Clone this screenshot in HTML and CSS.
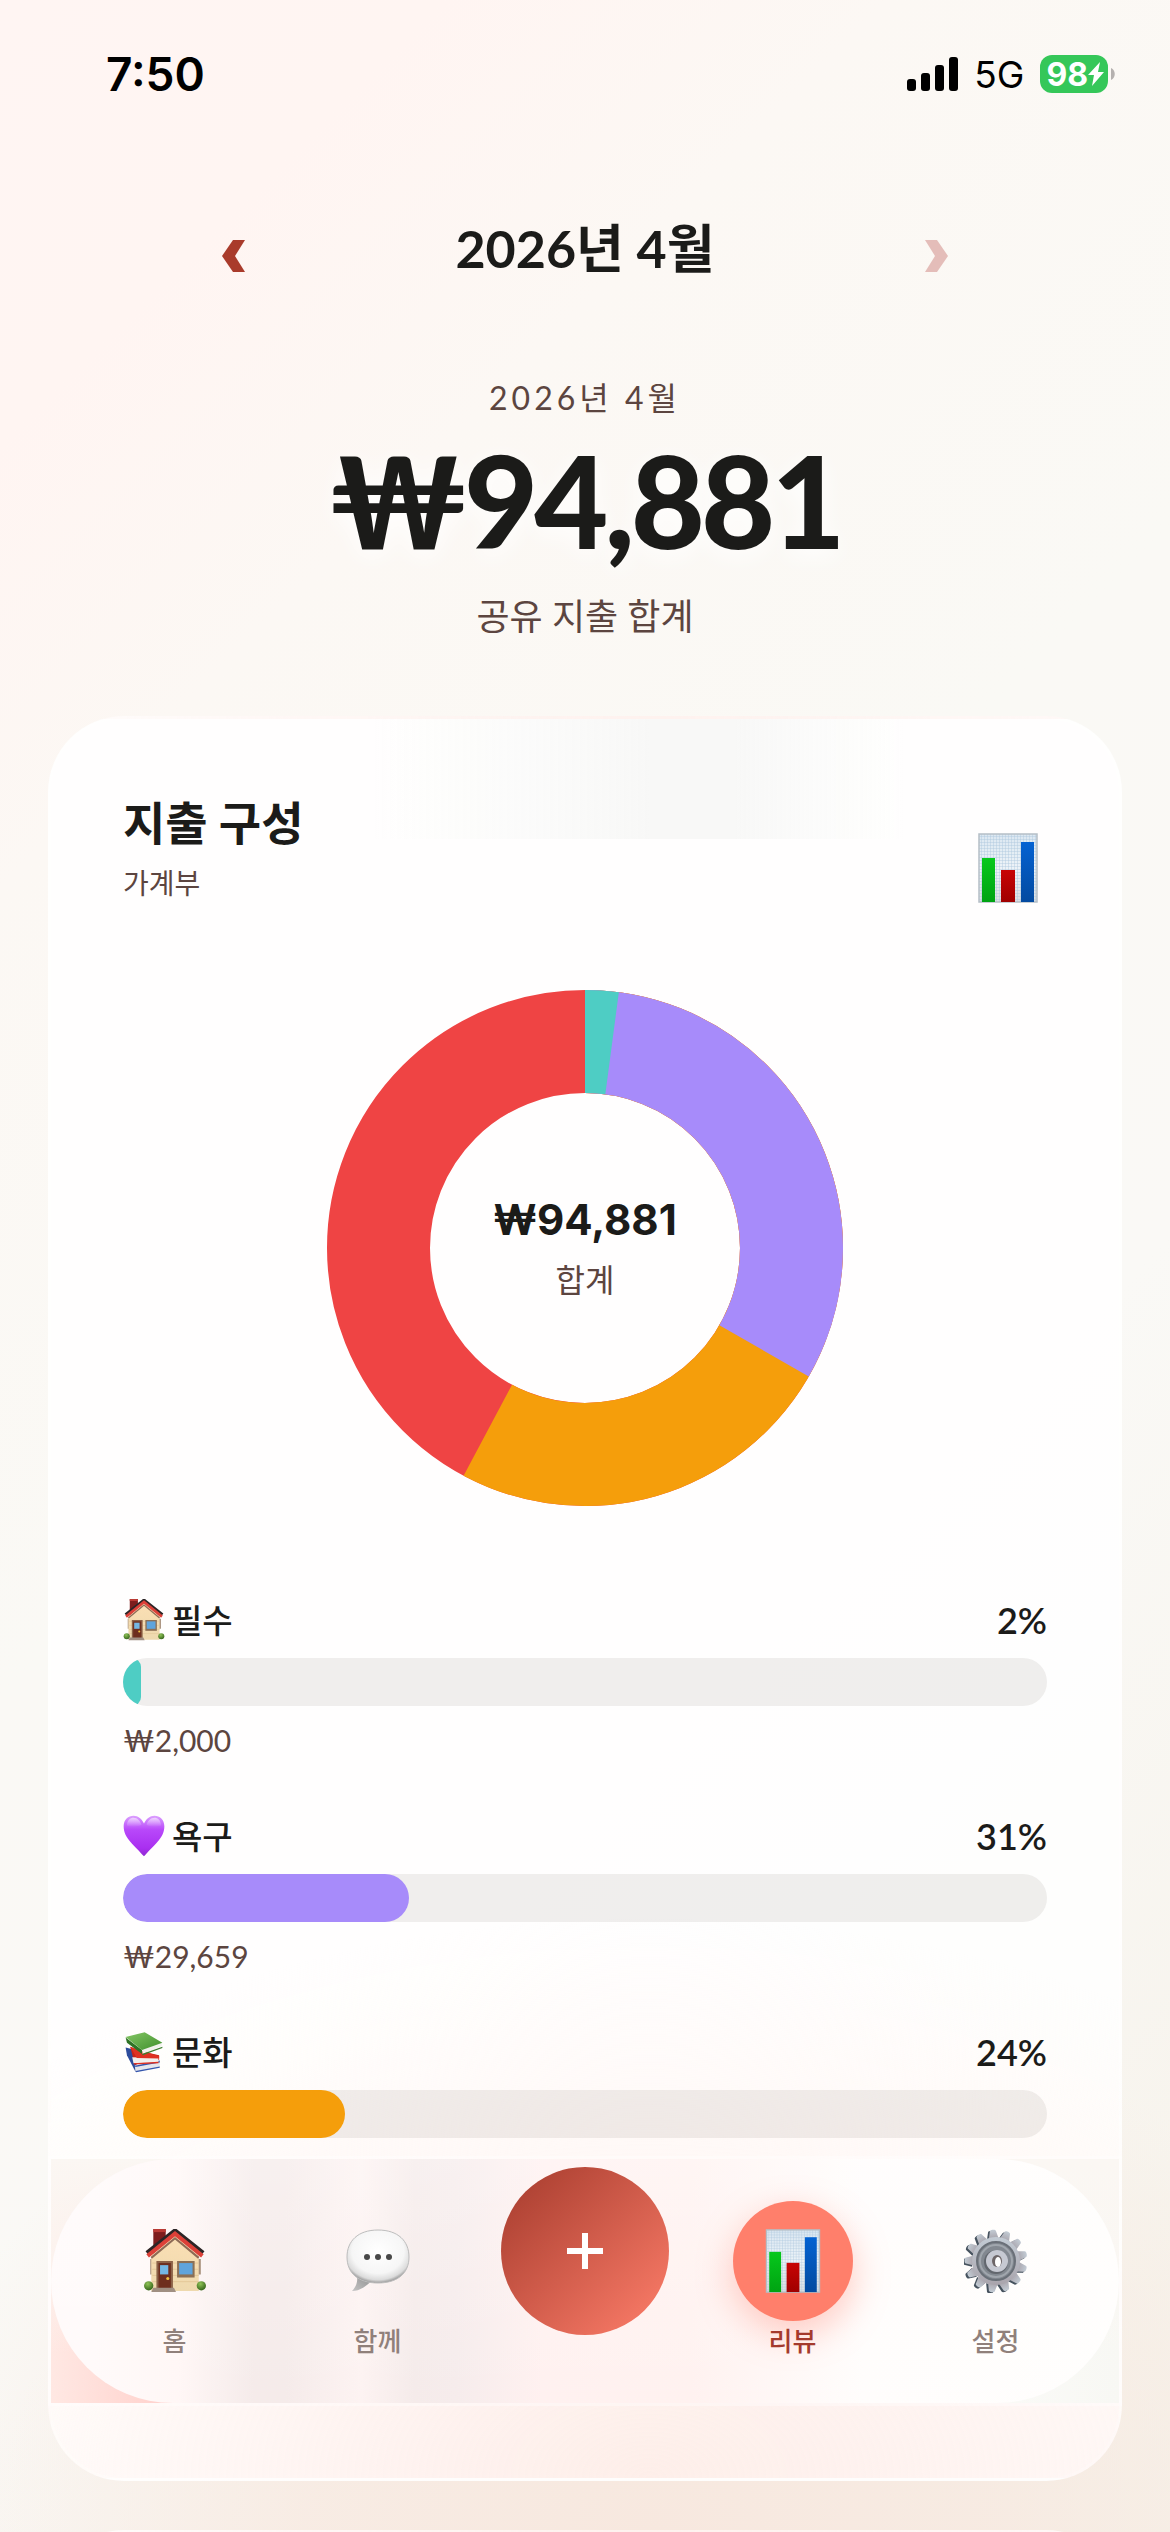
FILE: index.html
```html
<!DOCTYPE html>
<html lang="ko">
<head>
<meta charset="utf-8">
<meta name="viewport" content="width=device-width, initial-scale=1">
<title>리뷰</title>
<link rel="stylesheet" href="styles.css">
</head>
<body>
<svg class="defs" aria-hidden="true">
  <defs>
    <linearGradient id="paper" x1="0" y1="0" x2="0" y2="1"><stop offset="0" stop-color="#dbe7f1"/><stop offset=".5" stop-color="#edf3f8"/><stop offset="1" stop-color="#dcdfe2"/></linearGradient>
    <linearGradient id="green" x1="0" y1="0" x2="0" y2="1"><stop offset="0" stop-color="#06c81c"/><stop offset="1" stop-color="#00a312"/></linearGradient>
    <linearGradient id="crimson" x1="0" y1="0" x2="0" y2="1"><stop offset="0" stop-color="#c80404"/><stop offset="1" stop-color="#a00000"/></linearGradient>
    <linearGradient id="blue" x1="0" y1="0" x2="0" y2="1"><stop offset="0" stop-color="#0462d2"/><stop offset="1" stop-color="#034aa0"/></linearGradient>
    <linearGradient id="wall" x1="0" y1="0" x2="0" y2="1"><stop offset="0" stop-color="#fbdfb4"/><stop offset="1" stop-color="#eed9ae"/></linearGradient>
    <radialGradient id="bush" cx=".4" cy=".3" r=".7"><stop offset="0" stop-color="#8fc356"/><stop offset="1" stop-color="#37661c"/></radialGradient>
    <linearGradient id="heart" x1="0" y1="0" x2="0" y2="1"><stop offset="0" stop-color="#dca0ff"/><stop offset=".35" stop-color="#b848fa"/><stop offset=".8" stop-color="#a92ff0"/><stop offset="1" stop-color="#8f2ad0"/></linearGradient>
    <linearGradient id="shine" x1="0" y1="0" x2="0" y2="1"><stop offset="0" stop-color="#fff" stop-opacity=".6"/><stop offset="1" stop-color="#fff" stop-opacity="0"/></linearGradient>
    <radialGradient id="bubble" cx=".5" cy=".4" r=".6"><stop offset="0" stop-color="#fff"/><stop offset=".7" stop-color="#f6f6f6"/><stop offset=".9" stop-color="#dcdcdc"/><stop offset="1" stop-color="#9a9a9a"/></radialGradient>
    <linearGradient id="tail" x1="1" y1="0" x2="0" y2="1"><stop offset="0" stop-color="#8d8d8d"/><stop offset="1" stop-color="#c4c4c4"/></linearGradient>
    <linearGradient id="steel" x1="0" y1="0" x2="0" y2="1"><stop offset="0" stop-color="#c3ccd5"/><stop offset="1" stop-color="#a9a4ac"/></linearGradient>
    <linearGradient id="cover" x1="0" y1="0" x2="1" y2="1"><stop offset="0" stop-color="#84c665"/><stop offset="1" stop-color="#3f8f2c"/></linearGradient>
    <pattern id="grid" width="3" height="3" patternUnits="userSpaceOnUse"><path d="M0 0H3M0 0V3" stroke="#a9c6dd" stroke-width=".8" fill="none"/></pattern>
    <symbol id="i-chart" viewBox="0 0 60 70">
      <rect x="1" y="1" width="58" height="68" fill="url(#paper)"/>
      <rect x="1" y="1" width="58" height="68" fill="url(#grid)"/>
      <rect x="1" y="1" width="58" height="68" fill="none" stroke="#b5bec6" stroke-width="1.5"/>
      <rect x="4" y="25" width="13" height="44" fill="url(#green)"/>
      <rect x="23" y="37" width="14" height="32" fill="url(#crimson)"/>
      <rect x="43" y="9" width="13" height="60" fill="url(#blue)"/>
    </symbol>
    <symbol id="i-house" viewBox="2 2 60 62">
      <path d="M11 2h12v13L11 26z" fill="#7d1d1d"/><path d="M11 2h12v3H11z" fill="#b93a34"/>
      <path d="M8 31h3v15H8zM54 31h3v15h-3z" fill="#a8917c"/>
      <path d="M9 28L32 8l23 20v34H9z" fill="url(#wall)"/>
      <path d="M10 35h45M10 41h45M10 47h45M10 53h45" stroke="#e2c595" stroke-width=".8"/>
      <path d="M9 30L32 11 55 30" fill="none" stroke="#8e6a55" stroke-width="2"/>
      <path d="M5 25.500L32 4l27 21.500" fill="none" stroke="#2c2526" stroke-width="5"/>
      <path d="M5.500 28L32 6.500 58.500 28" fill="none" stroke="#dc4038" stroke-width="4"/>
      <path d="M14 33h16v27H14z" fill="#8c6248"/><path d="M16 35h12v25H16z" fill="#6e2e1e"/>
      <path d="M17.500 37h8v9h-8z" fill="#74b7e4"/><circle cx="25" cy="50" r="1.500" fill="#f0c040"/>
      <path d="M34 33h17v16H34z" fill="#8c7055"/><path d="M36 35h13v11H36z" fill="#5fa4dc"/>
      <circle cx="6.500" cy="57" r="4.500" fill="url(#bush)"/><circle cx="57.500" cy="57" r="4.500" fill="url(#bush)"/>
      <path d="M11 59h20l2 4H9z" fill="#a08f82"/>
    </symbol>
    <symbol id="i-heart" viewBox="0 0 64 64">
      <path d="M32 63C18 46 1 36 1 17 1 7 8 1 16 1c7 0 13 5 16 12C35 6 41 1 48 1c8 0 15 6 15 16 0 19-17 29-31 46z" fill="url(#heart)"/>
      <path d="M6 16C6 8 11 4 16 4c6 0 11 5 12 11-6 4-16 4-22 1zM36 15C37 9 42 4 48 4c5 0 10 4 10 12-6 3-16 3-22-1z" fill="url(#shine)"/>
    </symbol>
    <symbol id="i-books" viewBox="0 0 64 64">
      <path d="M4 25l12 3 6 32-3 2L6 37z" fill="#2d4c9c"/><path d="M19 62l37-7v-8L18 52z" fill="#e4e6ec"/><path d="M18 53l38-8v3l-37 7zM19 61l37-7v2l-36 7z" fill="#3456ad"/>
      <path d="M11 24l22 8 22 5v7l-37 7z" fill="#c92418"/><path d="M14 40l40 1v7l-38 1z" fill="#f2efec"/><path d="M11 24l10 17 34 1v-4l-28-8zM16 49l38-2v2l-37 2z" fill="#de3122"/>
      <path d="M4 10l25 19v6L6 18z" fill="#2e7325"/><path d="M29 28l30-10v5L30 35z" fill="#f1f1ec"/><path d="M4 9L33 2l27 16-31 11z" fill="url(#cover)"/><path d="M29 35l31-11v2L30 37z" fill="#3c7c2e"/>
    </symbol>
    <symbol id="i-chat" viewBox="0 0 64 64">
      <path d="M11 46c1 7-1 12-5 16 8 0 15-5 20-11z" fill="url(#tail)"/>
      <path d="M32 1c20 0 31 11 31 27S52 54 32 54 1 44 1 28 12 1 32 1z" fill="url(#bubble)" stroke="#bdbdbd"/>
      <g fill="#484848"><circle cx="21" cy="28" r="3"/><circle cx="32" cy="28" r="3"/><circle cx="43" cy="28" r="3"/></g>
    </symbol>
    <path id="tooth" d="M27 10l2-8c0-2 6-2 6 0l2 8z"/>
    <g id="teeth"><use href="#tooth"/><use href="#tooth" transform="rotate(28 32 32)"/><use href="#tooth" transform="rotate(55 32 32)"/><use href="#tooth" transform="rotate(83 32 32)"/><use href="#tooth" transform="rotate(111 32 32)"/><use href="#tooth" transform="rotate(138 32 32)"/><use href="#tooth" transform="rotate(166 32 32)"/><use href="#tooth" transform="rotate(194 32 32)"/><use href="#tooth" transform="rotate(222 32 32)"/><use href="#tooth" transform="rotate(249 32 32)"/><use href="#tooth" transform="rotate(277 32 32)"/><use href="#tooth" transform="rotate(305 32 32)"/><use href="#tooth" transform="rotate(332 32 32)"/></g>
    <symbol id="i-gear" viewBox="0 0 64 64">
      <g transform="rotate(-6 32 32)"><use href="#teeth" x="-2" y="1" fill="#46525e"/><use href="#teeth" fill="url(#steel)"/></g>
      <circle cx="32" cy="32" r="24" fill="url(#steel)"/>
      <circle cx="32" cy="32" r="19" fill="#828890" stroke="#6a7078" stroke-width="2"/>
      <circle cx="32" cy="32" r="16" fill="none" stroke="#a0a6ad" stroke-width="2"/>
      <circle cx="32" cy="33" r="12" fill="#62676e"/><circle cx="33" cy="32" r="11" fill="#c6c9d2"/>
      <ellipse cx="33" cy="32" rx="5" ry="6" fill="#6d6668"/><ellipse cx="34" cy="33" rx="3" ry="5" fill="#fff"/>
    </symbol>
  </defs>
</svg>

<div class="app">
  <header class="status">
    <span class="clock">7:50</span>
    <div class="status-right">
      <svg class="signal" viewBox="0 0 51 34" aria-hidden="true"><rect y="22" width="9" height="12" rx="3"/><rect x="14" y="16" width="9" height="18" rx="3"/><rect x="28" y="8" width="9" height="26" rx="3"/><rect x="42" width="9" height="34" rx="3"/></svg>
      <span class="network">5G</span>
      <span class="battery"><span class="level">98<svg class="bolt" viewBox="0 0 16 26" aria-hidden="true"><path d="M12 1L0 14h6L4 25 16 11h-6z" fill="#fff"/></svg></span><svg class="nub" viewBox="0 0 4 12" aria-hidden="true"><path d="M0 0c5 2 5 10 0 12z" fill="#b5b1af"/></svg></span>
    </div>
  </header>

  <main>
    <div class="month-nav">
      <button class="step" type="button" aria-label="이전 달"><svg viewBox="0 0 23 32"><path d="M11 0h12L13 16l10 16H11L0 16z" fill="#a93b2b"/></svg></button>
      <h1>2026년 4월</h1>
      <button class="step" type="button" aria-label="다음 달" disabled><svg viewBox="0 0 23 32"><path d="M12 0H0l10 16L0 32h12l11-16z" fill="#e4bdb9"/></svg></button>
    </div>

    <section class="summary">
      <p class="period">2026년 4월</p>
      <p class="amount">₩94,881</p>
      <p class="caption">공유 지출 합계</p>
    </section>

    <section class="card">
      <div class="card-head">
        <div>
          <h2>지출 구성</h2>
          <p class="book">가계부</p>
        </div>
        <svg class="card-icon" aria-hidden="true"><use href="#i-chart"/></svg>
      </div>

      <div class="donut">
        <svg viewBox="0 0 516 516" role="img" aria-label="지출 구성">
          <g fill="none" stroke-width="103" transform="rotate(-90 258 258)">
            <circle cx="258" cy="258" r="206.500" stroke="#ef4444"/>
            <circle cx="258" cy="258" r="206.500" stroke="#f59e0b" pathLength="1000" stroke-dasharray="578 422"/>
            <circle cx="258" cy="258" r="206.500" stroke="#a78bfa" pathLength="1000" stroke-dasharray="333 667"/>
            <circle cx="258" cy="258" r="206.500" stroke="#4ecdc4" pathLength="1000" stroke-dasharray="21 979"/>
          </g>
        </svg>
        <div class="donut-label">
          <strong>₩94,881</strong>
          <span>합계</span>
        </div>
      </div>

      <ul class="legend">
        <li>
          <div class="row"><span class="name"><svg aria-hidden="true"><use href="#i-house"/></svg>필수</span><span class="pct">2%</span></div>
          <div class="track"><div class="fill teal" style="width:2%"></div></div>
          <p class="won">₩2,000</p>
        </li>
        <li>
          <div class="row"><span class="name"><svg aria-hidden="true"><use href="#i-heart"/></svg>욕구</span><span class="pct">31%</span></div>
          <div class="track"><div class="fill purple" style="width:31%"></div></div>
          <p class="won">₩29,659</p>
        </li>
        <li>
          <div class="row"><span class="name"><svg aria-hidden="true"><use href="#i-books"/></svg>문화</span><span class="pct">24%</span></div>
          <div class="track"><div class="fill amber" style="width:24%"></div></div>
        </li>
      </ul>
    </section>
    <section class="card next"></section>
  </main>
</div>

<nav class="tabs">
  <ul>
    <li><a href="#home"><span class="tab-icon"><svg aria-hidden="true"><use href="#i-house"/></svg></span>홈</a></li>
    <li><a href="#together"><span class="tab-icon"><svg aria-hidden="true"><use href="#i-chat"/></svg></span>함께</a></li>
    <li><button class="add" type="button" aria-label="추가"><svg viewBox="0 0 38 38"><path d="M19 1v36M1 19h36" stroke="#fff" stroke-width="6"/></svg></button></li>
    <li><a class="active" href="#review" aria-current="page"><span class="tab-icon"><svg aria-hidden="true"><use href="#i-chart"/></svg></span>리뷰</a></li>
    <li><a href="#settings"><span class="tab-icon"><svg aria-hidden="true"><use href="#i-gear"/></svg></span>설정</a></li>
  </ul>
</nav>
</body>
</html>
```

FILE: styles.css
```css
* { box-sizing: border-box; }

body {
  margin: 0;
  color: #1b1b19;
  background: #fbf9f6;
  font-family: Lato, "Noto Sans CJK KR", sans-serif;
}

h1, h2, p, ul { margin: 0; padding: 0; }
ul { list-style: none; }
svg { display: block; }
button { border: 0; padding: 0; background: none; }
.defs { position: absolute; width: 0; height: 0; }

.app {
  height: 100vh;
  overflow: hidden auto;
  scrollbar-width: none;
  background:
    radial-gradient(ellipse 760px 560px at 56% 100%, #f7e8df 0%, rgba(247, 232, 223, .75) 45%, rgba(247, 232, 223, 0) 100%),
    linear-gradient(135deg, #fff5f3 0%, #fff5f2 12%, #fcf8f4 24%, #faf9f5 46%, #faf9f6 65%, #f6f2ea 100%);
}

.status {
  height: 148px;
  padding: 0 55px 0 106px;
  display: flex;
  align-items: center;
  justify-content: space-between;
  color: #000;
  font-family: Inter, sans-serif;
}
.clock { font-size: 46px; font-weight: 600; }
.status-right { display: flex; align-items: center; gap: 16px; }
.signal { width: 51px; height: 34px; }
.network { font-size: 37px; }
.battery { display: flex; align-items: center; gap: 3px; }
.level {
  height: 38px;
  padding: 0 4px 0 6px;
  display: flex;
  align-items: center;
  border-radius: 12px;
  background: #35c759;
  color: #fff;
  font-size: 32px;
  font-weight: 700;
}
.bolt { width: 16px; height: 26px; }
.nub { width: 4px; height: 12px; }

.month-nav {
  height: 200px;
  padding: 0 222px;
  display: flex;
  align-items: center;
  justify-content: space-between;
}
.month-nav h1 { font-size: 52px; line-height: 64px; font-weight: 700; }
.step { padding-top: 16px; }
.step svg { width: 23px; height: 32px; }

.summary { padding-top: 30px; text-align: center; color: #5c4540; }
.period { font-size: 32px; line-height: 40px; letter-spacing: 4px; }
.amount {
  padding-top: 2px;
  color: #1b1b19;
  font-size: 128px;
  line-height: 160px;
  font-weight: 900;
  letter-spacing: -4px;
  text-shadow: 0 6px 24px #fff;
}
.caption { padding-top: 12px; font-size: 36px; line-height: 48px; }

.card {
  margin: 76px 48px 0;
  padding: 72px 72px 340px;
  border: 3px solid rgba(255, 255, 255, .2);
  border-radius: 76px;
  background:
    radial-gradient(ellipse 900px 560px at 56% 100%, rgba(253, 234, 229, .8), rgba(255, 245, 241, .5) 60%, rgba(255, 255, 255, 0)),
    linear-gradient(90deg, rgba(248, 248, 247, 0) 30%, #f8f8f7 56%, #f8f8f7 64%, rgba(248, 248, 247, 0) 80%) 0 0 / 100% 120px no-repeat,
    rgba(255, 255, 255, .85);
}
.card.next { margin-top: 49px; min-height: 240px; }

.card-head { display: flex; align-items: flex-end; justify-content: space-between; padding-right: 9px; }
.card-head h2 { font-size: 46px; line-height: 64px; font-weight: 700; }
.book { padding-top: 8px; font-size: 28px; line-height: 40px; color: #5c4540; }
.card-icon { width: 60px; height: 70px; }

.donut { margin: 87px auto 0; width: 516px; display: grid; align-items: center; justify-items: center; }
.donut > * { grid-area: 1 / 1; }
.donut > svg { width: 516px; height: 516px; }
.donut-label { display: flex; flex-direction: column; align-items: center; gap: 12px; }
.donut-label strong { font: 700 42px/52px Inter, "Noto Sans CJK KR", sans-serif; }
.donut-label span { font-size: 32px; line-height: 44px; color: #5c4540; }

.legend { padding-top: 92px; display: flex; flex-direction: column; gap: 54px; }
.row { height: 44px; display: flex; align-items: center; justify-content: space-between; }
.name { display: flex; align-items: center; gap: 7px; font-size: 33px; line-height: 44px; font-weight: 500; }
.name svg { width: 42px; height: 42px; }
.pct { font-size: 36px; line-height: 44px; font-weight: 600; }
.track { margin-top: 16px; height: 48px; border-radius: 24px; overflow: hidden; background: rgba(84, 74, 64, .09); }
.fill { height: 100%; border-radius: 24px; }
.teal { background: #4ecdc4; }
.purple { background: #a78bfa; }
.amber { background: #f59e0b; }
.won { padding-top: 14px; font-size: 30px; line-height: 40px; color: #5c4540; }

.tabs {
  position: fixed;
  left: 48px;
  right: 48px;
  bottom: 126px;
  border: 3px solid rgba(255, 255, 255, .4);
  background:
    linear-gradient(180deg, #fbf7f3, rgba(251, 247, 243, .7) 40%, rgba(251, 247, 243, 0) 80%),
    linear-gradient(90deg, #ffe8e3, #ffcfca 12%, #fff0ee 45%, #fdfdfb 75%, #f8f8f4);
  background-clip: padding-box;
}
.tabs ul {
  height: 244px;
  padding: 0 22px;
  display: grid;
  grid-template-columns: 1fr 1fr 212px 1fr 1fr;
  border-radius: 122px;
  background:
    linear-gradient(180deg, rgba(255, 255, 255, .25), rgba(255, 238, 237, 0)),
    linear-gradient(90deg, #fffafa 4%, #fff7f6 12%, #f5ebea 19%, #f5ebea 22%, #fdf3f2 29%, #f5ebea 34%, #f6ecec 38%, #fff1f0 46%, #fff2f0 60%, #fffdfc 76%, #fffefd);
}
.tabs a {
  display: flex;
  flex-direction: column;
  align-items: center;
  padding-top: 42px;
  color: #90807b;
  font-size: 26px;
  line-height: 40px;
  font-weight: 500;
  text-decoration: none;
}
.tab-icon {
  width: 120px;
  height: 120px;
  display: grid;
  place-items: center;
  border-radius: 50%;
}
.tab-icon svg { width: 64px; height: 64px; }
.tabs .active { color: #a43a2c; }
.active .tab-icon { background: #ff7f6b; box-shadow: 0 12px 36px rgba(255, 127, 107, .4); }
.add {
  width: 168px;
  height: 168px;
  margin: 8px auto 0;
  display: grid;
  place-items: center;
  border-radius: 50%;
  background: linear-gradient(135deg, #a43a2c, #ff7f6b);
}
.add svg { width: 38px; height: 38px; }
```
